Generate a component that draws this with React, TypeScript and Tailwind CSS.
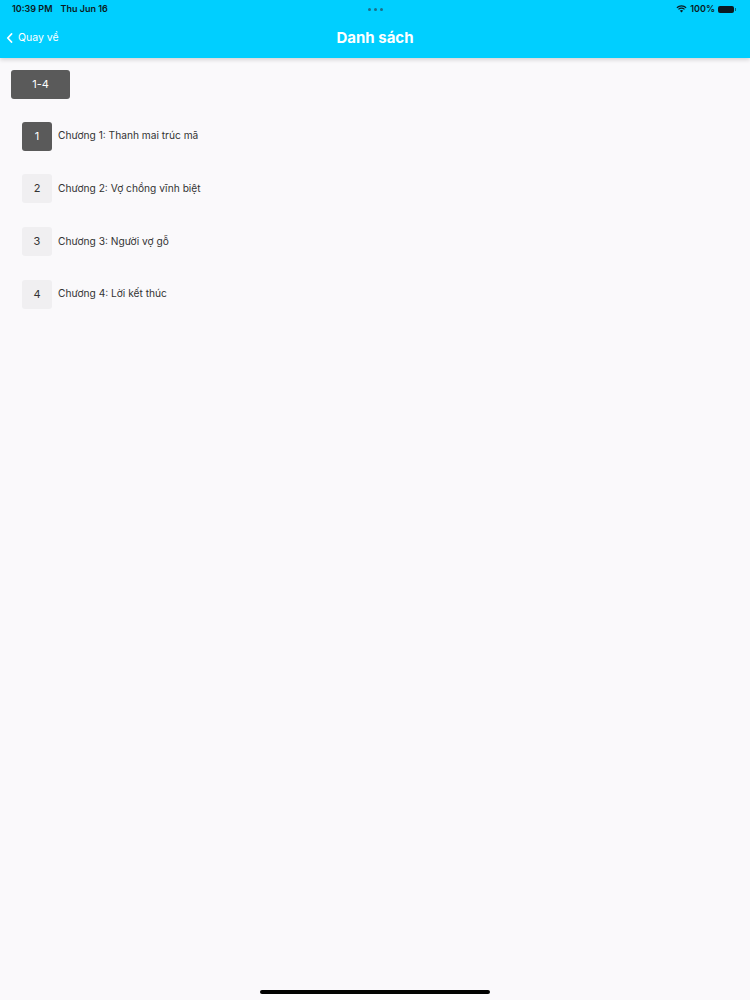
import React from "react";

const chapters = [
  "Chương 1: Thanh mai trúc mã",
  "Chương 2: Vợ chồng vĩnh biệt",
  "Chương 3: Người vợ gỗ",
  "Chương 4: Lời kết thúc",
];

export default function App() {
  return (
    <div
      className="relative w-[750px] h-[1000px] bg-[#faf9fb] overflow-hidden"
      style={{ fontFamily: "Inter, 'Noto Sans', 'Liberation Sans', sans-serif" }}
    >
      {/* Header */}
      <div className="relative bg-[#00cfff] h-[58px] shadow-[0_2px_4px_rgba(0,0,0,0.15)] z-10">
        {/* status bar */}
        <div className="flex items-center justify-between h-[18px] px-[12px] text-[9px] font-semibold text-[#0b1a22]">
          <div className="flex gap-[8px]">
            <span>10:39 PM</span>
            <span>Thu Jun 16</span>
          </div>
          <div className="flex gap-[3px] absolute left-[368px] top-[8px]">
            <span className="w-[3px] h-[3px] rounded-full bg-[#1a6f8a]" />
            <span className="w-[3px] h-[3px] rounded-full bg-[#1a6f8a]" />
            <span className="w-[3px] h-[3px] rounded-full bg-[#1a6f8a]" />
          </div>
          <div className="flex items-center gap-[3px] mr-[2px]">
            <svg width="11" height="8" viewBox="0 0 12 9">
              <path d="M6 8.5 L4.2 6.6 A2.6 2.6 0 0 1 7.8 6.6 Z" fill="#0b1a22" />
              <path d="M2.6 5 A4.8 4.8 0 0 1 9.4 5" stroke="#0b1a22" strokeWidth="1.3" fill="none" />
              <path d="M0.8 3.1 A7.4 7.4 0 0 1 11.2 3.1" stroke="#0b1a22" strokeWidth="1.3" fill="none" />
            </svg>
            <span>100%</span>
            <div className="flex items-center">
              <div className="w-[16px] h-[7px] rounded-[2px] bg-[#0b1a22]" />
              <div className="w-[1px] h-[3px] bg-[#0b1a22] opacity-60 ml-[1px]" />
            </div>
          </div>
        </div>
        {/* nav */}
        <div className="relative flex items-center h-[40px]">
          <div className="flex items-center gap-[5px] pl-[6px] text-white text-[10.5px]">
            <svg width="7" height="10" viewBox="0 0 7 10">
              <path d="M5.5 1 L1.8 5 L5.5 9" stroke="white" strokeWidth="1.8" fill="none" strokeLinecap="round" strokeLinejoin="round" />
            </svg>
            <span>Quay về</span>
          </div>
          <div className="absolute inset-0 flex items-center justify-center text-white text-[15px] font-bold pt-[1px]">
            Danh sách
          </div>
        </div>
      </div>

      {/* Content */}
      <div className="pl-[11px] pt-[12px]">
        <div className="w-[59px] h-[29px] rounded-[3px] bg-[#5a5a5a] text-white text-[11px] flex items-center justify-center">
          1-4
        </div>
        <div className="pl-[11px] pt-[22px] flex flex-col gap-[22.7px]">
          {chapters.map((c, i) => (
            <div key={i} className="flex items-center gap-[6px] h-[30px]">
              <div
                className={
                  i === 0
                    ? "w-[30px] h-[29px] rounded-[3px] bg-[#5a5a5a] text-white text-[11px] flex items-center justify-center"
                    : "w-[30px] h-[29px] rounded-[3px] bg-[#f0eff1] text-[#333] text-[11px] flex items-center justify-center"
                }
              >
                {i + 1}
              </div>
              <span className="text-[10.2px] text-[#333]">{c}</span>
            </div>
          ))}
        </div>
      </div>

      {/* home indicator */}
      <div className="absolute left-[260px] top-[990px] w-[230px] h-[4px] rounded-full bg-black" />
    </div>
  );
}
